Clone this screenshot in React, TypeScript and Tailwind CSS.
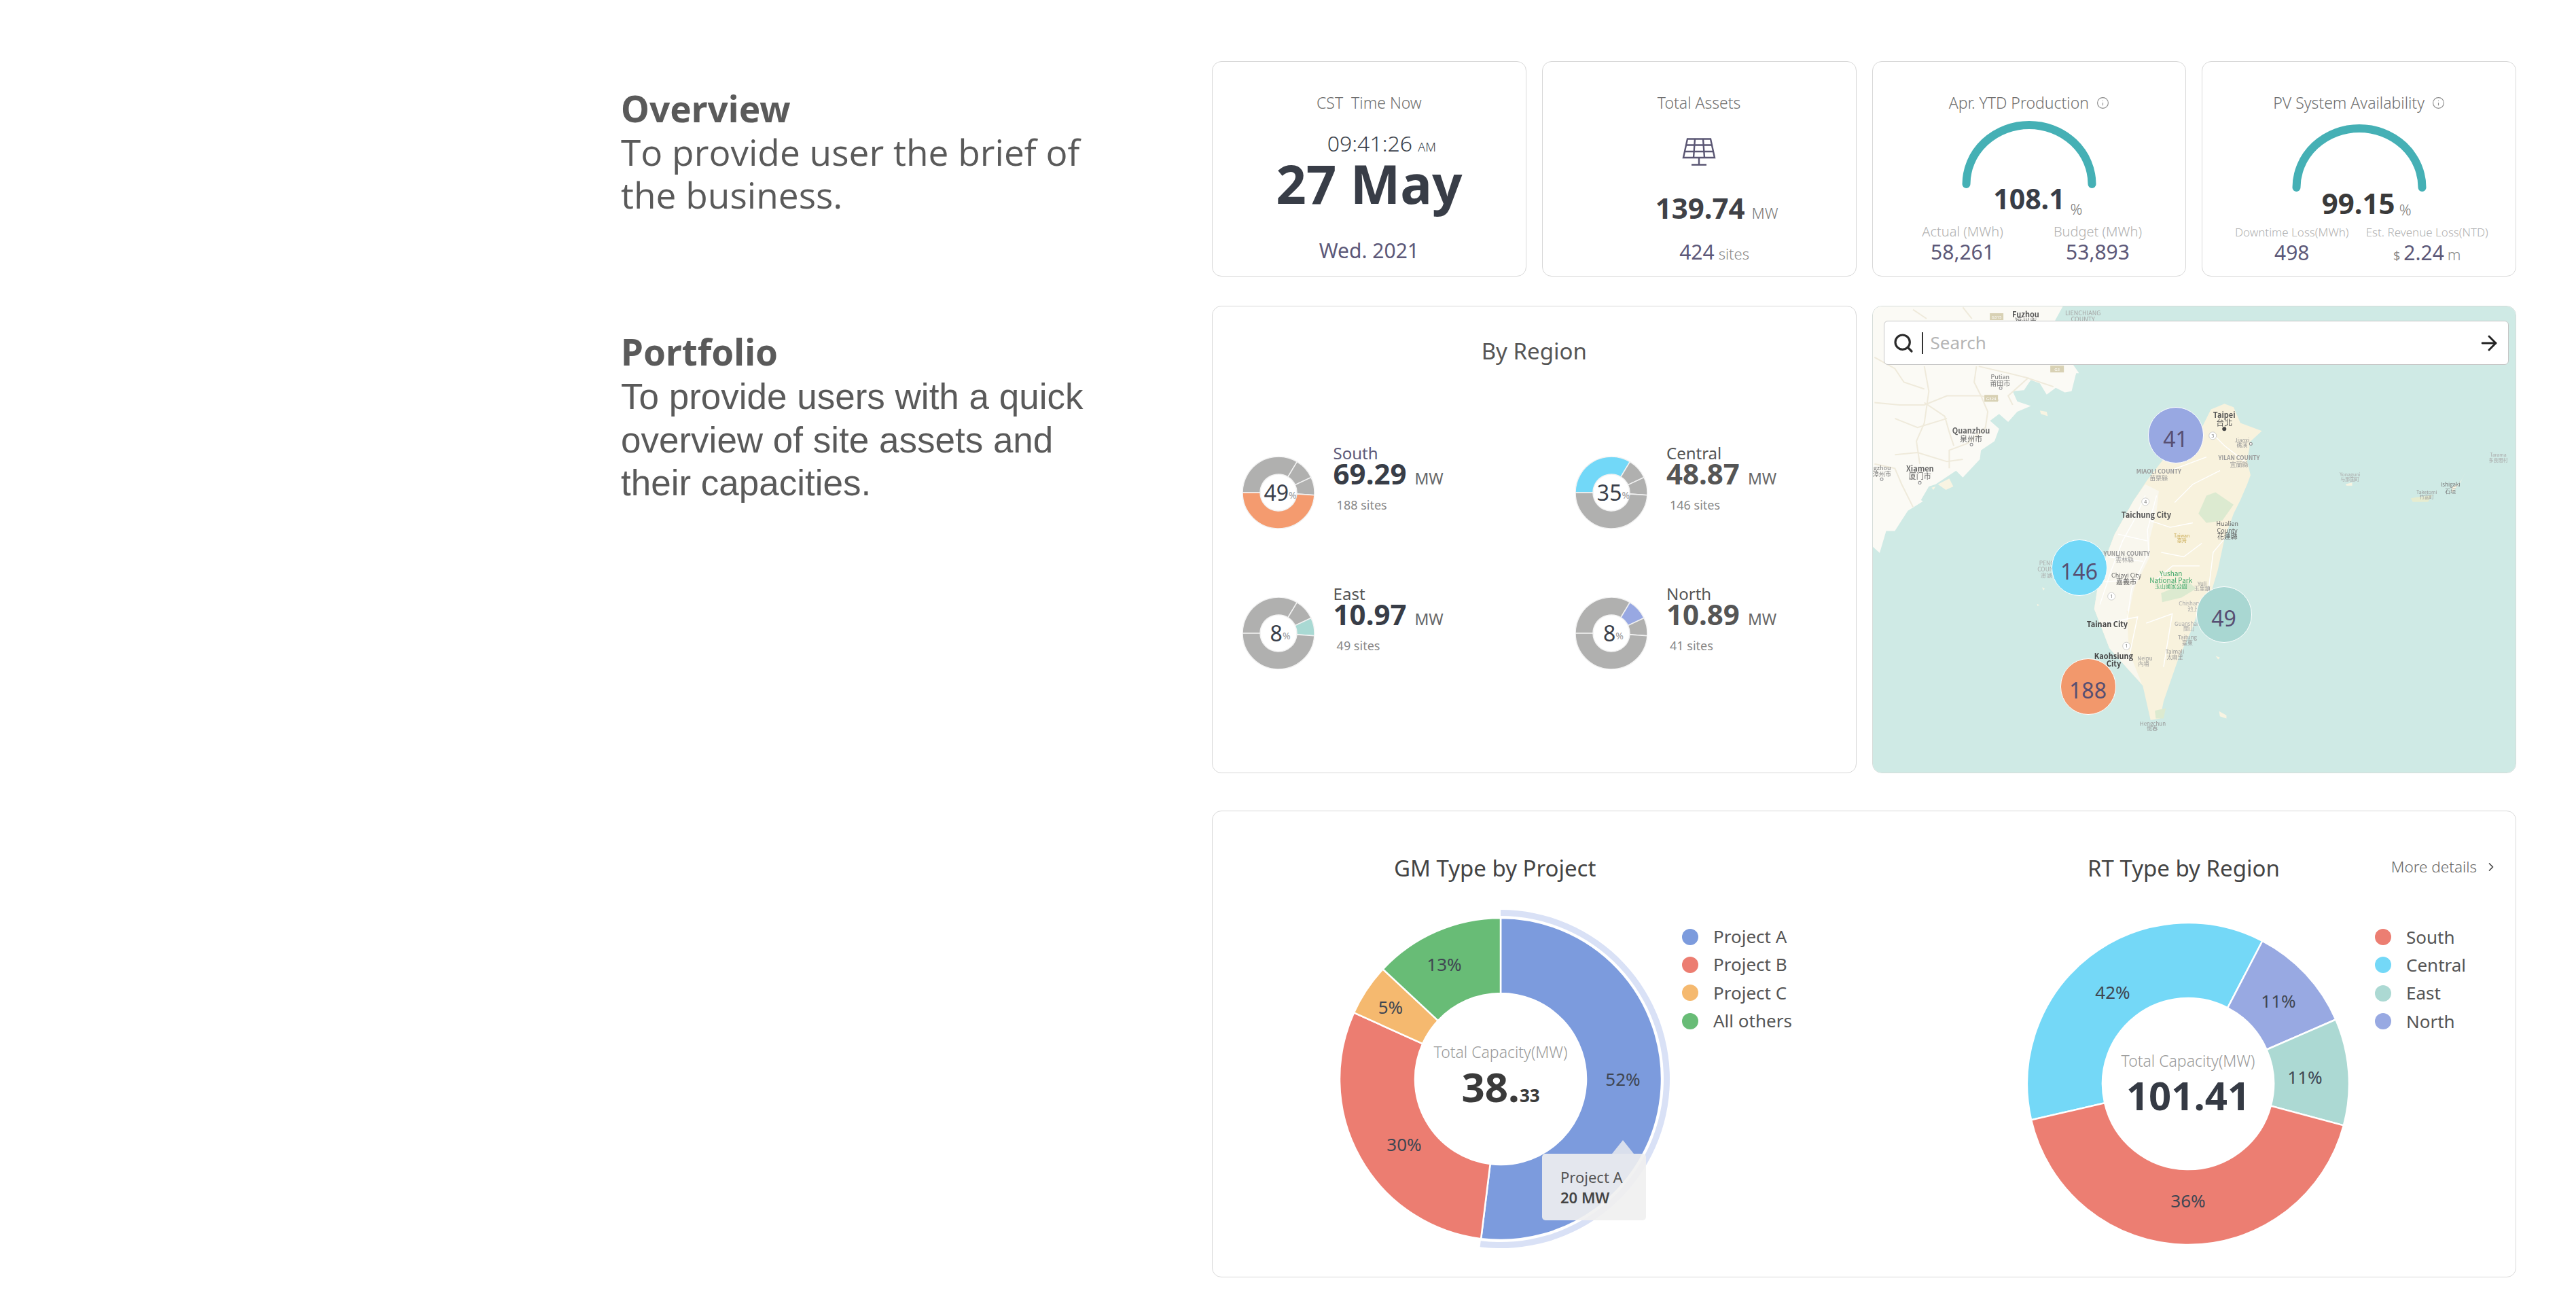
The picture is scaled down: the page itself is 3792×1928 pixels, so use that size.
import React from "react";
import { ArrowRight, ChevronRight, Info, Search } from "lucide-react";

// polar helpers, degrees clockwise from 12 o'clock
const polar = (cx: number, cy: number, r: number, a: number) => {
  const t = (a * Math.PI) / 180;
  return [cx + r * Math.sin(t), cy - r * Math.cos(t)];
};

const slicePath = (cx: number, cy: number, r0: number, r1: number, a0: number, a1: number) => {
  const [x0, y0] = polar(cx, cy, r1, a0);
  const [x1, y1] = polar(cx, cy, r1, a1);
  const [x2, y2] = polar(cx, cy, r0, a1);
  const [x3, y3] = polar(cx, cy, r0, a0);
  const big = a1 - a0 > 180 ? 1 : 0;
  return `M${x0} ${y0}A${r1} ${r1} 0 ${big} 1 ${x1} ${y1}L${x2} ${y2}A${r0} ${r0} 0 ${big} 0 ${x3} ${y3}Z`;
};

const GRAY = "#b0b0af";

const regions = [
  { name: "South", value: "69.29", sites: "188 sites", pct: "49", color: "#f49b6f", hit: 3, labelColor: "text-[#5c5878]", valueColor: "text-[#383d47]" },
  { name: "Central", value: "48.87", sites: "146 sites", pct: "35", color: "#72d8f8", hit: 0, labelColor: "text-[#555555]", valueColor: "text-[#555555]" },
  { name: "East", value: "10.97", sites: "49 sites", pct: "8", color: "#a9d9d3", hit: 2, labelColor: "text-[#555555]", valueColor: "text-[#383d47]" },
  { name: "North", value: "10.89", sites: "41 sites", pct: "8", color: "#98a8e2", hit: 1, labelColor: "text-[#555555]", valueColor: "text-[#555555]" },
];

const miniSegments: [number, number][] = [
  [-90, 31],
  [31, 65],
  [65, 94],
  [94, 270],
];

const RegionItem = ({ r }: { r: (typeof regions)[number] }) => (
  <div className="flex items-start gap-[28px]">
    <div className="relative mt-[21px] h-[106px] w-[106px] shrink-0">
      <svg width="106" height="106" viewBox="0 0 106 106">
        {miniSegments.map((s, i) => (
          <path
            key={i}
            d={slicePath(53, 53, 27, 53, s[0], s[1])}
            fill={i === r.hit ? r.color : GRAY}
            stroke="#f2f2f2"
            strokeWidth="1.5"
          />
        ))}
      </svg>
      <div className="absolute inset-0 flex items-center justify-center pl-[6px]">
        <span className="text-[32px] leading-none text-[#3a3f4a]">{r.pct}</span>
        <span className="mt-[8px] text-[14px] leading-none text-[#999999]">%</span>
      </div>
    </div>
    <div className="flex flex-col">
      <div className={`text-[24px] leading-[32px] ${r.labelColor}`}>{r.name}</div>
      <div className="-mt-[8px] flex h-[44px] items-baseline gap-[12px] leading-[44px]">
        <span className={`text-[42px] font-bold ${r.valueColor}`}>{r.value}</span>
        <span className="text-[23px] text-[#666666]">MW</span>
      </div>
      <div className="mt-[11px] ml-[5px] text-[18px] leading-[26px] text-[#888888]">{r.sites}</div>
    </div>
  </div>
);

// the map is traced from the picture; z* take the wide crop, p() the 3x crop of the coast
const zx = (v: number) => 2750 + v / 1.568;
const zy = (v: number) => 440 + v / 2.178;
const p = (x: number, y: number) => [2755 + x / 3, 450 + y / 3];
const q = (x: number, y: number) => [3040 + x / 3, 580 + y / 3];
const z = (x: number, y: number) => [zx(x), zy(y)];
const line = (pts: number[][], close = true) =>
  pts.map((c, i) => `${i ? "L" : "M"}${c[0]} ${c[1]}`).join("") + (close ? "Z" : "");
const curve = (pts: number[][]) => line(pts, false);

const mainland = [
  [2750, 446], z(450, 20), z(430, 70), z(440, 130), z(470, 210), z(485, 240),
  p(900, 300), p(880, 350), p(850, 385), p(810, 365), p(770, 395), p(740, 345), p(700, 330), p(670, 375), p(620, 380),
  p(640, 425), p(700, 445), p(640, 470), p(600, 515), p(560, 480), p(520, 510), p(560, 545), p(540, 600), p(480, 640),
  p(475, 680), p(400, 760), p(370, 730), p(280, 790), p(250, 800), p(215, 860), z(125, 650), z(90, 680), z(60, 745),
  z(40, 745), z(25, 815), [2750, 800],
];
const taiwan = [
  q(700, 45), q(740, 60), q(770, 130), q(865, 165), q(810, 215), q(810, 240), q(800, 300), q(815, 360), q(800, 400),
  q(770, 470), q(740, 530), q(700, 640), q(670, 780), q(640, 880),
  z(760, 1000), z(745, 1060), z(715, 1150), z(680, 1290), z(672, 1345), z(650, 1350), z(632, 1240), z(600, 1190), z(555, 1120),
  z(530, 1030), q(125, 950), q(150, 790), q(215, 620), q(300, 470), q(360, 380), q(430, 290), q(600, 150), q(640, 70),
];
const westPlain = [
  q(350, 400), q(410, 430), q(400, 520), q(370, 640), q(370, 720), q(300, 860), q(280, 960), z(595, 1000), z(600, 1130), z(630, 1235),
  z(600, 1190), z(555, 1120), z(530, 1030), q(125, 950), q(150, 790), q(215, 620), q(300, 470),
];
const mainRoads = [
  [p(10, 430), p(120, 440), p(230, 440), p(330, 400), p(480, 400), p(560, 420)],
  [p(230, 270), p(250, 380), p(230, 520), p(195, 600), p(210, 700)],
  [p(10, 230), p(100, 280), p(140, 340), p(230, 370)],
  [p(460, 270), p(450, 340), p(480, 400), p(510, 470), p(500, 540), p(420, 610), p(340, 640), p(340, 720)],
  [p(100, 660), p(200, 650), p(330, 690), p(400, 680)],
  [p(230, 430), p(320, 490), p(340, 560), p(360, 620)],
  [p(470, 270), p(600, 300), p(680, 320), p(800, 360)],
  [p(10, 700), p(100, 720), p(130, 790), p(180, 890)],
  [p(690, 320), p(600, 400), p(620, 440)],
  [p(180, 20), p(240, 60)],
  [p(400, 10), p(440, 60)],
  [p(100, 500), p(200, 540), p(330, 500)],
];
const taiwanRoads = [
  [q(350, 450), q(300, 560), q(250, 650), q(200, 780), q(150, 930)],
  [q(400, 450), q(360, 600), q(365, 700), q(290, 860), q(270, 1000)],
  [q(230, 620), q(360, 650)],
  [q(190, 720), q(340, 740)],
  [q(170, 830), q(310, 820)],
  [q(370, 560), q(460, 590), q(560, 570)],
  [q(640, 170), q(700, 230), q(790, 300)],
  [q(460, 340), q(620, 280)],
  [q(700, 640), q(650, 700), q(625, 900)],
  [q(480, 480), q(560, 400), q(680, 340)],
  [q(420, 700), q(520, 720), q(600, 660)],
  [q(400, 820), q(470, 760), q(590, 760)],
  [z(545, 1040), z(620, 1020), z(600, 1150)],
  [z(640, 1040), z(700, 1010), z(680, 1180)],
];
const islands = [
  [z(1345, 605), z(1365, 590), z(1378, 550), z(1368, 580), z(1345, 625)],
  [z(1250, 640), z(1300, 630), z(1290, 652), z(1255, 652)],
  [z(1100, 595), z(1115, 590), z(1115, 600), z(1102, 600)],
  [z(808, 1322), z(825, 1335), z(825, 1345), z(810, 1338)],
  [z(800, 1145), z(810, 1150), z(806, 1156)],
  [z(400, 925), z(406, 930), z(402, 935)],
  [z(388, 978), z(394, 982), z(389, 985)],
  [p(740, 465), p(770, 470), p(775, 490), p(745, 480)],
  [p(290, 790), p(340, 765), p(358, 800), p(325, 815)],
  [p(262, 805), p(280, 800), p(270, 815)],
  [p(850, 320), p(900, 300), p(880, 380), p(850, 385)],
];

const CJK = "'Noto Sans CJK TC','Noto Sans',sans-serif";
type L = [string, number, number, number, string, number?];
const labels: L[] = [
  ["Fuzhou", 362, 52, 11, "#555555", 600],
  ["福州市", 362, 74, 11, "#666666"],
  ["LIENCHIANG", 494, 48, 9, "#a5a5a5"],
  ["COUNTY", 494, 68, 9, "#a5a5a5"],
  ["Putian", 303, 251, 9, "#777777"],
  ["莆田市", 303, 272, 10, "#777777"],
  ["Quanzhou", 236, 425, 11, "#666666", 600],
  ["泉州市", 236, 450, 11, "#666666"],
  ["Zhangzhou", 14, 543, 9, "#777777"],
  ["漳州市", 30, 563, 9, "#777777"],
  ["Xiamen", 118, 547, 11, "#666666", 600],
  ["厦门市", 118, 571, 11, "#666666"],
  ["Taipei", 820, 375, 11, "#555555", 600],
  ["台北", 820, 400, 12, "#555555"],
  ["Jiaoxi", 861, 455, 8, "#999999"],
  ["礁溪", 861, 471, 8, "#999999"],
  ["YILAN COUNTY", 854, 511, 8.5, "#999999", 600],
  ["宜蘭縣", 854, 532, 9, "#999999"],
  ["MIAOLI COUNTY", 669, 555, 8.5, "#999999", 600],
  ["苗栗縣", 669, 575, 9, "#999999"],
  ["Taichung City", 640, 693, 11, "#555555", 600],
  ["Hualien", 827, 721, 9, "#666666"],
  ["County", 827, 743, 9, "#666666"],
  ["花蓮縣", 827, 763, 10, "#555555"],
  ["Taiwan", 722, 760, 7, "#c9a94f"],
  ["臺灣", 722, 776, 7, "#c9a94f"],
  ["YUNLIN COUNTY", 595, 817, 8.5, "#999999", 600],
  ["雲林縣", 590, 837, 9, "#999999"],
  ["PENGHU", 420, 849, 8.5, "#aaaaaa"],
  ["COUNTY", 415, 868, 8.5, "#aaaaaa"],
  ["澎湖", 410, 888, 8.5, "#aaaaaa"],
  ["Chiayi City", 594, 887, 9, "#666666"],
  ["嘉義市", 594, 907, 10, "#555555"],
  ["Yushan", 697, 882, 10, "#3fa76a"],
  ["National Park", 697, 903, 10, "#3fa76a"],
  ["玉山國家公園", 697, 922, 8, "#3fa76a"],
  ["Yuli", 769, 913, 8, "#999999"],
  ["玉里鎮", 769, 929, 8, "#999999"],
  ["Chishang", 742, 977, 8, "#aaaaaa"],
  ["池上", 748, 994, 8, "#aaaaaa"],
  ["Guanshan", 735, 1042, 8, "#aaaaaa"],
  ["關山", 738, 1058, 8, "#aaaaaa"],
  ["Taitung", 735, 1086, 8, "#999999"],
  ["臺東", 735, 1103, 8, "#999999"],
  ["Taimali", 706, 1132, 8, "#999999"],
  ["太麻里", 706, 1149, 8, "#999999"],
  ["Neipu", 637, 1153, 8, "#999999"],
  ["內埔", 634, 1170, 8, "#999999"],
  ["Tainan City", 550, 1044, 11, "#444444", 600],
  ["Kaohsiung", 565, 1146, 11, "#444444", 600],
  ["City", 565, 1170, 11, "#444444", 600],
  ["Hengchun", 655, 1361, 8, "#999999"],
  ["恆春", 654, 1377, 8, "#999999"],
  ["Yonaguni", 1110, 564, 7, "#aaaaaa"],
  ["与那国町", 1110, 580, 7, "#aaaaaa"],
  ["Ishigaki", 1342, 597, 8, "#777777"],
  ["石垣", 1342, 618, 8, "#777777"],
  ["Taketomi", 1287, 620, 7, "#999999"],
  ["竹富町", 1287, 637, 7, "#999999"],
  ["Tarama", 1452, 501, 7, "#aaaaaa"],
  ["多良間村", 1452, 518, 7, "#aaaaaa"],
];
const towns = [[2901, 655], [2825, 711], [2944, 572], [2769, 706], [3312, 654]];
const shields = [[3256, 642, "3"], [3157, 739, "4"], [3107, 878, "1"], [3129, 951, "1"]] as const;
const badges = [[2930, 587, "G324"], [3027, 544, "G3"], [2938, 467, "G315"]] as const;

const MapDrawing = () => (
  <svg className="absolute inset-0 h-full w-full blur-[0.4px]" viewBox="2756 452 946 685" preserveAspectRatio="none">
    <rect x="2756" y="452" width="946" height="685" fill="#cfeae5" />
    <path d={line(mainland)} fill="#fbfaf5" />
    <path d={line(islands[10])} fill="#fbfaf5" />
    {mainRoads.map((r, i) => (
      <path key={i} d={curve(r)} fill="none" stroke="#efeadb" strokeWidth="2" />
    ))}
    <path d={line(taiwan)} fill="#f8f2dd" />
    <path d={line(westPlain)} fill="#f9f7ee" />
    {taiwanRoads.map((r, i) => (
      <path key={i} d={curve(r)} fill="none" stroke="#ffffff" strokeWidth="1.4" />
    ))}
    <path d={line([q(620, 450), q(660, 435), q(740, 490), q(690, 560), q(620, 570), q(585, 530)])} fill="#dcead0" />
    <path d={line([q(420, 880), q(540, 830), q(575, 860), q(510, 900), q(425, 920)])} fill="#dcead0" />
    <path d={line([z(660, 1320), z(685, 1312), z(680, 1345), z(662, 1345)])} fill="#dcead0" />
    {islands.slice(0, 10).map((r, i) => (
      <path key={i} d={line(r)} fill={i === 1 ? "#e6ecd0" : "#f8f4e2"} />
    ))}
    {badges.map(([x, y, t]) => (
      <g key={t}>
        <rect x={x - 10} y={y - 5} width="20" height="10" fill="#d8d1b4" />
        <text x={x} y={y + 3} textAnchor="middle" fontSize="6" fill="#ffffff">
          {t}
        </text>
      </g>
    ))}
    {towns.map(([x, y]) => (
      <circle key={x} cx={x} cy={y} r="2" fill="#ffffff" stroke="#888888" />
    ))}
    <circle cx="3273" cy="632" r="3" fill="#444444" />
    {shields.map(([x, y, t]) => (
      <g key={x}>
        <circle cx={x} cy={y} r="5.5" fill="#ffffff" stroke="#bbbbbb" strokeWidth="0.7" />
        <text x={x} y={y + 2.5} textAnchor="middle" fontSize="7" fill="#777777">
          {t}
        </text>
      </g>
    ))}
    {labels.map((l, i) => (
      <text
        key={i}
        x={zx(l[1])}
        y={zy(l[2]) + l[3] * 0.36}
        textAnchor="middle"
        fontSize={l[3]}
        fill={l[4]}
        fontWeight={l[5] ?? 400}
        style={{ fontFamily: CJK }}
      >
        {l[0]}
      </text>
    ))}
  </svg>
);

const Cluster = ({ n, className }: { n: number; className: string }) => (
  <div
    className={`absolute flex h-[83px] w-[82px] items-center justify-center rounded-full border-[1.5px] border-white pt-[10px] text-[32px] leading-none text-[#574f72] ${className}`}
  >
    {n}
  </div>
);

const Gauge = () => (
  <svg width="198" height="99" viewBox="0 0 198 99" className="shrink-0">
    <path d="M6.5 93 A92.5 87 0 0 1 191.5 93" fill="none" stroke="#45b0b5" strokeWidth="12" strokeLinecap="round" />
  </svg>
);

const SolarPanel = () => (
  <svg width="50" height="41" viewBox="0 0 50 41" fill="none" stroke="#5a5673" strokeWidth="2.4">
    <path d="M8 1.5H42L48 29H2Z" />
    <path d="M19 1.5L17 29M31 1.5L33 29M6 10.5H44M4 20H46" />
    <path d="M25 29V39M14 39.5H36" />
  </svg>
);

type Slice = { a0: number; a1: number; color: string };
type Lbl = { t: string; x: number; y: number };

const BigDonut = ({ slices, labels: ls, ring, children }: { slices: Slice[]; labels: Lbl[]; ring?: boolean; children: React.ReactNode }) => (
  <div className="relative h-[500px] w-[500px] shrink-0">
    <svg width="500" height="500" viewBox="0 0 500 500">
      {ring && <path d={slicePath(250, 250, 240, 249, 0, 187)} fill="#d9e1f6" />}
      {slices.map((s, i) => (
        <path key={i} d={slicePath(250, 250, 126, 237, s.a0, s.a1)} fill={s.color} stroke="#ffffff" strokeWidth="2.5" />
      ))}
      {ls.map((l) => (
        <text key={l.t + l.x} x={l.x} y={l.y + 9} textAnchor="middle" fontSize="26" fill="#3f4652">
          {l.t}
        </text>
      ))}
    </svg>
    <div className="absolute inset-0 flex flex-col items-center justify-center pt-[2px]">
      <div className="text-[23px] leading-[30px] font-light text-[#9a9a9a]">Total Capacity(MW)</div>
      {children}
    </div>
  </div>
);

const Legend = ({ items, className }: { items: [string, string][]; className: string }) => (
  <div className={`flex flex-col ${className}`}>
    {items.map(([name, c]) => (
      <div key={name} className="flex h-[41.3px] items-center gap-[22px]">
        <span className="h-[24px] w-[24px] rounded-full" style={{ backgroundColor: c }} />
        <span className="text-[26px] text-[#555555]">{name}</span>
      </div>
    ))}
  </div>
);

const cardClass = "rounded-[14px] border border-[#d8d8d8] bg-white";
const statTitle = "text-[23px] leading-[30px] font-light text-[#6f6f6f]";
const subLabel = "leading-[26px] font-light whitespace-nowrap text-[#b0b0b0]";
const purple = "text-[#5c5878]";

export default function App() {
  return (
    <div className="flex min-h-[1928px] w-[3792px] bg-white pt-[90px] font-['Noto_Sans',sans-serif]">
      {/* left notes */}
      <div className="w-[1784px] shrink-0 pt-[38px] pl-[914px] text-[53px] leading-[63.5px] text-[#5a5a5a]">
        <div className="w-[720px]">
          <h2 className="font-bold">Overview</h2>
          <p className="font-['Open_Sans',sans-serif] text-[53.2px]">To provide user the brief of the business.</p>
        </div>
        <div className="mt-[167px] w-[720px]">
          <h2 className="font-bold">Portfolio</h2>
          <p className="mt-[3px] font-['Liberation_Sans',sans-serif]">To provide users with a quick overview of site assets and their capacities.</p>
        </div>
      </div>

      <div className="w-[1920px] shrink-0">
        {/* stat cards */}
        <div className="grid h-[317px] grid-cols-4 gap-[23px]">
          <div className={`${cardClass} flex flex-col items-center pt-[45px]`}>
            <div className={`${statTitle} whitespace-pre`}>CST  Time Now</div>
            <div className="mt-[29px] pl-[37px] text-[32px] leading-[32px] font-light text-[#3a3f4a]">
              09:41:26 <span className="text-[18px]">AM</span>
            </div>
            <div className="-mt-[2px] text-[78px] leading-[80px] font-bold text-[#383d47]">27 May</div>
            <div className={`mt-[41px] text-[30px] leading-[36px] ${purple}`}>Wed. 2021</div>
          </div>

          <div className={`${cardClass} flex flex-col items-center pt-[45px]`}>
            <div className={statTitle}>Total Assets</div>
            <div className="mt-[37px]">
              <SolarPanel />
            </div>
            <div className="mt-[40px] flex h-[44px] items-baseline gap-[10px] pl-[52px] leading-[44px]">
              <span className="text-[42px] font-bold text-[#3f4147]">139.74</span>
              <span className="text-[22px] font-light text-[#777777]">MW</span>
            </div>
            <div className="mt-[26px] flex h-[34px] items-baseline gap-[6px] pl-[45px] leading-[34px]">
              <span className={`text-[30px] ${purple}`}>424</span>
              <span className="text-[22px] font-light text-[#888888]">sites</span>
            </div>
          </div>

          <div className={`${cardClass} flex flex-col items-center pt-[45px]`}>
            <div className={`${statTitle} flex items-center gap-[11px]`}>
              Apr. YTD Production <Info size={19} strokeWidth={1.4} className="text-[#8a8a8a]" />
            </div>
            <div className="mt-[12px]">
              <Gauge />
            </div>
            <div className="-mt-[7px] flex h-[44px] items-baseline gap-[8px] pl-[26px] leading-[44px]">
              <span className="text-[41px] font-bold text-[#383d47]">108.1</span>
              <span className="translate-y-[8px] text-[22px] font-light text-[#777777]">%</span>
            </div>
            <div className="mt-[14px] grid w-full grid-cols-[199px_199px] pl-[33px] text-center">
              <div className={`${subLabel} text-[20px]`}>Actual (MWh)</div>
              <div className={`${subLabel} text-[20px]`}>Budget (MWh)</div>
              <div className={`text-[30px] leading-[34px] ${purple}`}>58,261</div>
              <div className={`text-[30px] leading-[34px] ${purple}`}>53,893</div>
            </div>
          </div>

          <div className={`${cardClass} flex flex-col items-center pt-[45px]`}>
            <div className={`${statTitle} flex items-center gap-[11px]`}>
              PV System Availability <Info size={19} strokeWidth={1.4} className="text-[#8a8a8a]" />
            </div>
            <div className="mt-[17px]">
              <Gauge />
            </div>
            <div className="-mt-[5px] flex h-[44px] items-baseline gap-[6px] pl-[22px] leading-[44px]">
              <span className="text-[42px] font-bold text-[#3a3a3a]">99.15</span>
              <span className="translate-y-[2px] text-[22px] font-light text-[#777777]">%</span>
            </div>
            <div className="mt-[8px] grid w-full grid-cols-[199px_199px] pl-[32px] text-center">
              <div className={`${subLabel} text-[17px]`}>Downtime Loss(MWh)</div>
              <div className={`${subLabel} text-[17px]`}>Est. Revenue Loss(NTD)</div>
              <div className={`text-[30px] leading-[34px] ${purple}`}>498</div>
              <div className={`flex h-[34px] items-baseline justify-center gap-[5px] leading-[34px] ${purple}`}>
                <span className="text-[18px] text-[#888888]">$</span>
                <span className="text-[30px]">2.24</span>
                <span className="text-[22px] font-light text-[#888888]">m</span>
              </div>
            </div>
          </div>
        </div>

        {/* portfolio row */}
        <div className="mt-[43px] grid h-[688px] grid-cols-2 gap-[23px]">
          <div className={`${cardClass} pt-[44px]`}>
            <div className="text-center text-[33px] leading-[44px] text-[#555555]">By Region</div>
            <div className="mt-[112px] grid grid-cols-[490.4px_1fr] gap-y-[80px] pl-[43.6px]">
              {regions.map((r) => (
                <RegionItem key={r.name} r={r} />
              ))}
            </div>
          </div>

          <div className="relative overflow-hidden rounded-[14px] border border-[#d5dcd9]">
            <MapDrawing />
            <div className="absolute top-[21px] left-[16px] flex h-[65px] w-[920px] items-center rounded-[6px] border border-[#c5c5c5] bg-white pr-[11px] pl-[12px]">
              <Search size={32} strokeWidth={2.4} className="text-[#2a2a2a]" />
              <span className="mr-[11px] ml-[11px] h-[32px] w-[2px] bg-[#333333]" />
              <span className="text-[26px] text-[#b5b5b5]">Search</span>
              <ArrowRight size={34} strokeWidth={2} className="ml-auto text-[#222222]" />
            </div>
            <Cluster n={41} className="top-[148px] left-[405px] bg-[#98a8e2]" />
            <Cluster n={146} className="top-[343px] left-[263px] bg-[#72d8f8]" />
            <Cluster n={49} className="top-[412px] left-[476px] bg-[#a9d7d2]" />
            <Cluster n={188} className="top-[518px] left-[276px] bg-[#f2986c]" />
          </div>
        </div>

        {/* capacity charts */}
        <div className={`${cardClass} mt-[55px] flex h-[687px]`}>
          <div className="w-[1186px] shrink-0 pt-[62px]">
            <div className="pl-[267px] text-[33px] leading-[44px] text-[#444444]">GM Type by Project</div>
            <div className="mt-[38px] flex pl-[174px]">
              <BigDonut
                ring
                slices={[
                  { a0: 0, a1: 187, color: "#7c9bdd" },
                  { a0: 187, a1: 294.3, color: "#ec7d71" },
                  { a0: 294.3, a1: 313, color: "#f5b96f" },
                  { a0: 313, a1: 360, color: "#68bc76" },
                ]}
                labels={[
                  { t: "52%", x: 430, y: 251 },
                  { t: "30%", x: 108, y: 347 },
                  { t: "5%", x: 88, y: 145 },
                  { t: "13%", x: 167, y: 82 },
                ]}
              >
                <div className="mt-[2px] flex items-baseline leading-[68px] font-bold text-[#3a3a3a]">
                  <span className="text-[60px]">38.</span>
                  <span className="text-[26px]">33</span>
                </div>
                <div className="absolute top-[360px] left-[311px] flex h-[98px] w-[153px] flex-col justify-center rounded-[5px] bg-[#f0f0f0]/90 pl-[27px] text-[22px] leading-[30px] text-[#555555]">
                  <span className="absolute -top-[20px] left-[103px] h-0 w-0 border-x-[16px] border-b-[20px] border-x-transparent border-b-[#f0f0f0]/80" />
                  <div>Project A</div>
                  <div className="font-semibold text-[#444444]">20 MW</div>
                </div>
              </BigDonut>
              <Legend
                className="mt-[20px] ml-[17px]"
                items={[
                  ["Project A", "#7c9bdd"],
                  ["Project B", "#ec7d71"],
                  ["Project C", "#f5b96f"],
                  ["All others", "#68bc76"],
                ]}
              />
            </div>
          </div>

          <div className="flex-1 pt-[62px]">
            <div className="flex items-center pr-[26px] pl-[102px]">
              <span className="text-[33px] leading-[44px] text-[#444444]">RT Type by Region</span>
              <span className="ml-auto -translate-y-[2px] text-[22.5px] font-light text-[#666666]">More details</span>
              <ChevronRight size={20} strokeWidth={2} className="ml-[11px] -translate-y-[2px] text-[#444444]" />
            </div>
            <div className="mt-[44.5px] flex">
              <BigDonut
                slices={[
                  { a0: -103, a1: 27.5, color: "#74d8f7" },
                  { a0: 27.5, a1: 66.5, color: "#98a9e2" },
                  { a0: 66.5, a1: 105, color: "#acd9d3" },
                  { a0: 105, a1: 257, color: "#ec7e72" },
                ]}
                labels={[
                  { t: "42%", x: 139, y: 116 },
                  { t: "11%", x: 383, y: 129 },
                  { t: "11%", x: 422, y: 241 },
                  { t: "36%", x: 250, y: 423 },
                ]}
              >
                <div className="mt-[2px] text-[58px] leading-[68px] font-bold text-[#353a44]">101.41</div>
              </BigDonut>
              <Legend
                className="mt-[14px] ml-[25px]"
                items={[
                  ["South", "#ec7e72"],
                  ["Central", "#74d8f7"],
                  ["East", "#acd9d3"],
                  ["North", "#98a9e2"],
                ]}
              />
            </div>
          </div>
        </div>
      </div>
    </div>
  );
}
